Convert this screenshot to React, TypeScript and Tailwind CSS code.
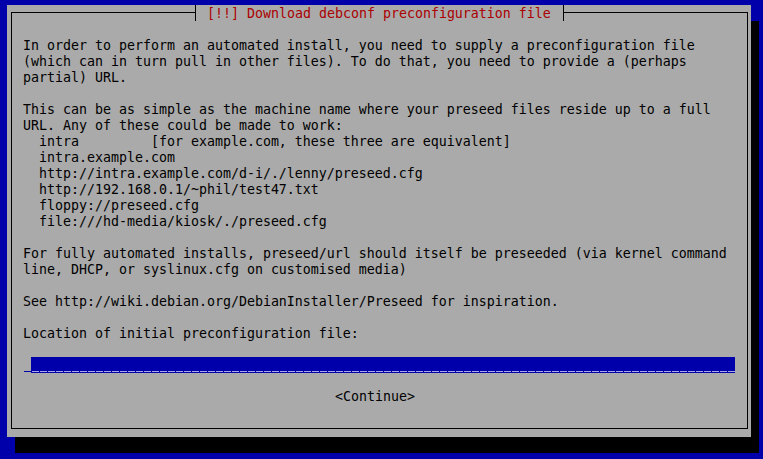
const body = [
  "In order to perform an automated install, you need to supply a preconfiguration file",
  "(which can in turn pull in other files). To do that, you need to provide a (perhaps",
  "partial) URL.",
  "",
  "This can be as simple as the machine name where your preseed files reside up to a full",
  "URL. Any of these could be made to work:",
  "  intra         [for example.com, these three are equivalent]",
  "  intra.example.com",
  "  http://intra.example.com/d-i/./lenny/preseed.cfg",
  "  http://192.168.0.1/~phil/test47.txt",
  "  floppy://preseed.cfg",
  "  file:///hd-media/kiosk/./preseed.cfg",
  "",
  "For fully automated installs, preseed/url should itself be preseeded (via kernel command",
  "line, DHCP, or syslinux.cfg on customised media)",
  "",
  "See http://wiki.debian.org/DebianInstaller/Preseed for inspiration.",
  "",
  "Location of initial preconfiguration file:",
  "",
];

const mono = "font-['DejaVu_Sans_Mono','Liberation_Mono',monospace] text-[13.29px] leading-[16px]";

const InputField = () => (
  <div className="flex h-4">
    <div className="flex h-4 w-2 items-end pb-[1px]">
      <span className="ml-[1px] h-[1px] w-[7px] bg-[#0000aa]" />
    </div>
    <div className="flex h-4 w-[704px] items-end bg-[#0000aa] pb-[1px]">
      {Array.from({ length: 88 }).map((_, i) => (
        <span key={i} className="ml-[1px] h-[1px] w-[7px] bg-[#a8a8e8]" />
      ))}
    </div>
  </div>
);

const App = () => {
  return (
    <div className="h-[459px] w-[763px] overflow-hidden bg-[#0000aa] pl-[7px] pt-[5px]">
      <div className="relative h-[432px] w-[744px] bg-[#aaaaaa] pl-1 pt-[7px] shadow-[8px_16px_0_#000]">
        <div className="h-[417px] w-[737px] border border-black pl-[11px] pt-[25px]">
          <pre className={`${mono} text-black`}>
            {body.map((line, i) => (
              <div key={i} className="h-4">
                {line}
              </div>
            ))}
          </pre>
          <div className="-mt-[1px]">
            <InputField />
          </div>
          <pre className={`${mono} mt-4 pl-[312px] text-black`}>&lt;Continue&gt;</pre>
        </div>
        <div className="absolute left-[188px] top-0 h-4 w-[369px] border-x border-black bg-[#aaaaaa] pl-[3px] pt-[1px]">
          <pre className={`${mono} text-[#aa0000]`}> [!!] Download debconf preconfiguration file</pre>
        </div>
      </div>
    </div>
  );
};

export default App;
